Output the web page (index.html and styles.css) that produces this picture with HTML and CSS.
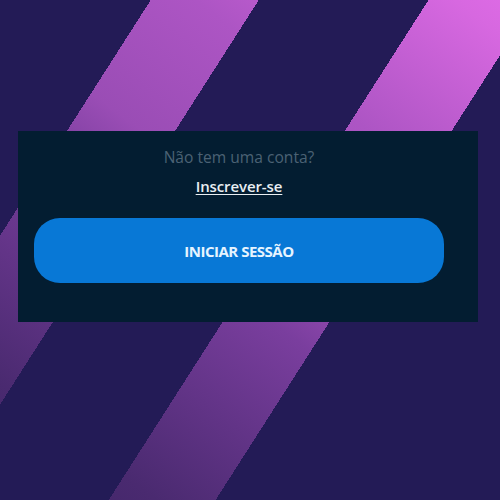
FILE: index.html
```html
<!DOCTYPE html>
<html lang="pt">
<head>
<meta charset="utf-8">
<title>Iniciar sessão</title>
<link rel="stylesheet" href="styles.css">
</head>
<body>
<main class="page">
  <section class="card">
    <p class="prompt">Não tem uma conta?</p>
    <a class="signup" href="#">Inscrever-se</a>
    <button class="login" type="button">INICIAR SESSÃO</button>
  </section>
</main>
</body>
</html>
```
FILE: styles.css
```css
html, body {
  margin: 0;
  padding: 0;
  width: 100%;
  height: 100%;
}
body {
  background:
    linear-gradient(122.6deg, #231b56 0px, #231b56 127px, transparent 127px, transparent 218px, #231b56 218px, #231b56 361px, transparent 361px, transparent 451px, #231b56 451px, #231b56 100%),
    linear-gradient(37deg, #3e2466 0px, #4a2a70 94px, #7a3e9e 306px, #9a4db5 380px, #ad55c4 517px, #d768e0 673px, #dc6ae4 700px);
  font-family: "Open Sans", "Noto Sans", sans-serif;
}
.page {
  padding-top: 131px;
  padding-left: 18px;
}
.card {
  width: 460px;
  height: 191px;
  box-sizing: border-box;
  background: #031d31;
  padding: 16px 34px 0 16px;
  display: flex;
  flex-direction: column;
  align-items: center;
}
.prompt {
  margin: 0;
  font-size: 15.6px;
  line-height: 21px;
  color: #4b6274;
}
.signup {
  margin-top: 8px;
  font-size: 15px;
  line-height: 20px;
  font-weight: 600;
  color: #e9eef2;
  text-decoration: underline;
  text-underline-offset: 2px;
  letter-spacing: -0.1px;
}
.login {
  margin-top: 22px;
  width: 410px;
  height: 65px;
  border: none;
  border-radius: 26px;
  background: #0878d6;
  color: #e6f4ff;
  font-family: "Open Sans", "Noto Sans", sans-serif;
  font-weight: 700;
  font-size: 15px;
  letter-spacing: -0.5px;
  padding: 0;
}
```
